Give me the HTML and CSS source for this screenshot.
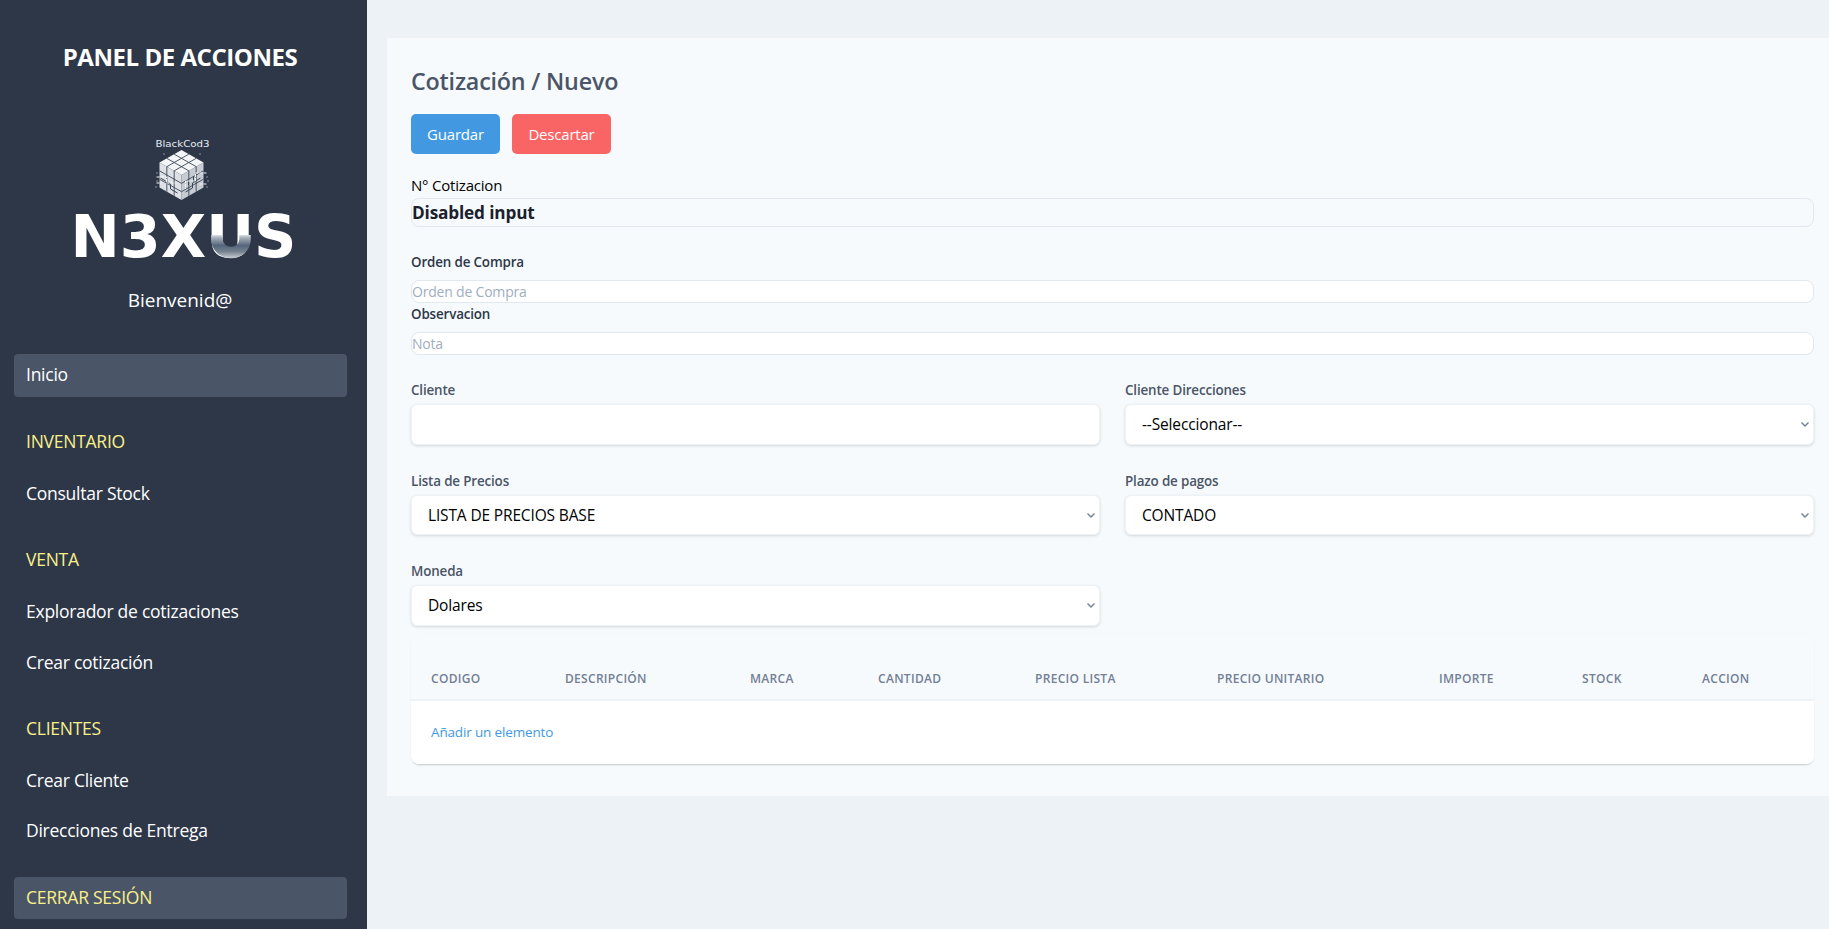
FILE: index.html
```html
<!DOCTYPE html>
<html lang="es">
<head>
<meta charset="utf-8">
<title>Cotización / Nuevo</title>
<link rel="stylesheet" href="styles.css">
</head>
<body>
<div class="app">
  <aside class="sidebar">
    <h1 class="panel-title">PANEL DE ACCIONES</h1>
    <svg class="logo" viewBox="-3.5 0 240 137" width="240" height="137" role="img" aria-label="BlackCod3 N3XUS">
      <defs>
        <linearGradient id="ugrad" gradientUnits="userSpaceOnUse" x1="0" y1="96" x2="0" y2="121">
          <stop offset="0" stop-color="#ffffff"/>
          <stop offset="0.2" stop-color="#a4aeb9"/>
          <stop offset="0.5" stop-color="#55657a"/>
          <stop offset="0.75" stop-color="#76838f"/>
          <stop offset="1" stop-color="#c7ced4"/>
        </linearGradient>
      </defs>
      <text class="logo-small" x="92" y="10" textLength="54" lengthAdjust="spacingAndGlyphs">BlackCod3</text>
      <g class="cube">
        <polygon class="face-top" points="118,13 140,25.5 118,38 96,25.5"/>
        <polygon class="face-left" points="96,25.5 118,38 118,63 96,50.5"/>
        <polygon class="face-right" points="140,25.5 118,38 118,63 140,50.5"/>
        <path class="cube-lines" d="M103.33 21.33L125.33 33.83M110.67 17.17L132.67 29.67M103.33 29.67L125.33 17.17M110.67 33.83L132.67 21.33M103.33 29.67V54.67M110.67 33.83V58.83M96 33.83L118 46.33M96 42.17L118 54.67M132.67 29.67V54.67M125.33 33.83V58.83M140 33.83L118 46.33M140 42.17L118 54.67"/>
        <path class="cube-dark" d="M97 41L107 47V52L114 56M122 55L129 51V46L137 41M125 42V48M130 39V45"/>
        <path class="cube-circuit" d="M93 40H103V46H112M143 36H132V44H122V52M93 46H98M136 47H143"/>
        <path class="cube-dots" d="M93 36h1M93 44h1M92 50h1M143 40h1M144 44h1M143 50h1M100 17h1M136 17h1"/>
      </g>
      <text class="logo-word" x="7" y="120">N3XUS</text>
      <path class="logo-u" d="M153.5 98V102.5A14 13 0 0 0 181.5 102.5V98"/>
    </svg>
    <p class="welcome">Bienvenid@</p>
    <nav class="nav">
      <a class="nav-item nav-box">Inicio</a>
      <div class="nav-heading">INVENTARIO</div>
      <a class="nav-item">Consultar Stock</a>
      <div class="nav-heading">VENTA</div>
      <a class="nav-item">Explorador de cotizaciones</a>
      <a class="nav-item nav-item-next">Crear cotización</a>
      <div class="nav-heading">CLIENTES</div>
      <a class="nav-item">Crear Cliente</a>
      <a class="nav-item nav-item-next">Direcciones de Entrega</a>
      <a class="nav-item nav-box nav-logout">CERRAR SESIÓN</a>
    </nav>
  </aside>
  <main class="main">
    <section class="card">
      <h2 class="page-title">Cotización / Nuevo</h2>
      <div class="actions">
        <button class="btn btn-blue" type="button">Guardar</button>
        <button class="btn btn-red" type="button">Descartar</button>
      </div>
      <label class="label-number" for="num">N° Cotizacion</label>
      <input class="input-number" id="num" type="text" value="Disabled input" disabled>
      <label class="label-dark label-order" for="oc">Orden de Compra</label>
      <input class="input-thin" id="oc" type="text" placeholder="Orden de Compra">
      <label class="label-dark label-note" for="nota">Observacion</label>
      <input class="input-thin" id="nota" type="text" placeholder="Nota">
      <div class="form-grid">
        <div class="field">
          <label class="label" for="cli">Cliente</label>
          <input class="control" id="cli" type="text">
        </div>
        <div class="field">
          <label class="label" for="dir">Cliente Direcciones</label>
          <select class="control" id="dir"><option>--Seleccionar--</option></select>
        </div>
        <div class="field">
          <label class="label" for="lista">Lista de Precios</label>
          <select class="control" id="lista"><option>LISTA DE PRECIOS BASE</option></select>
        </div>
        <div class="field">
          <label class="label" for="plazo">Plazo de pagos</label>
          <select class="control" id="plazo"><option>CONTADO</option></select>
        </div>
        <div class="field">
          <label class="label" for="mon">Moneda</label>
          <select class="control" id="mon"><option>Dolares</option></select>
        </div>
      </div>
      <div class="table-wrap">
        <table class="items">
          <thead>
            <tr>
              <th>Codigo</th><th>Descripción</th><th>Marca</th><th>Cantidad</th><th>Precio Lista</th><th>Precio Unitario</th><th>Importe</th><th>Stock</th><th>Accion</th>
            </tr>
          </thead>
          <tbody>
            <tr><td colspan="9"><a class="add-link">Añadir un elemento</a></td></tr>
          </tbody>
        </table>
      </div>
    </section>
  </main>
</div>
</body>
</html>
```
FILE: styles.css
```css
* { box-sizing: border-box; }
html, body { margin: 0; height: 100%; }
body {
  font-family: "Open Sans", "Noto Sans", "Liberation Sans", sans-serif;
  background: #edf2f7;
  color: #1a202c;
  overflow: hidden;
}
.app { display: flex; height: 929px; }

.sidebar {
  width: 367px;
  flex: none;
  background: #2d3748;
  color: #fff;
  display: flex;
  flex-direction: column;
  align-items: center;
  padding: 41px 7px 0 0;
}
.panel-title {
  margin: 0;
  font-size: 24px;
  line-height: 32px;
  font-weight: 700;
  letter-spacing: -0.45px;
}
.logo { display: block; margin-top: 64px; }
.logo-small { font: 400 9.5px "DejaVu Sans", sans-serif; fill: #e8edf2; }
.logo-word { font: 700 58.9px "DejaVu Sans", sans-serif; fill: #fff; }
.logo-u { fill: none; stroke: url(#ugrad); stroke-width: 11.5; }
.face-top { fill: #f3f5f7; }
.face-left { fill: #dde1e5; }
.face-right { fill: #c6ccd2; }
.cube-lines { fill: none; stroke: #3b4656; stroke-width: 0.9; }
.cube-dark { fill: none; stroke: #3b4656; stroke-width: 1; }
.cube-circuit { fill: none; stroke: #f4f6f8; stroke-width: 1; stroke-dasharray: 3 1; }
.cube-dots { fill: none; stroke: #e2e8f0; stroke-width: 1; }
.welcome {
  margin: 12px 0 0;
  font-size: 19px;
  line-height: 28px;
}
.nav { width: 100%; padding: 40px 13px 0 14px; display: flex; flex-direction: column; }
.nav-item {
  display: block;
  flex: none;
  padding: 7px 12px;
  font-size: 17.5px;
  line-height: 27px;
  height: 43px;
  letter-spacing: -0.25px;
  color: #fff;
  white-space: nowrap;
}
.nav-box { background: #4a5568; border-radius: 4px; }
.nav-item-next { margin-top: 7.5px; }
.nav-heading {
  flex: none;
  padding: 7px 12px;
  margin-top: 23px;
  height: 43px;
  font-size: 17.5px;
  line-height: 27px;
  letter-spacing: -0.25px;
  color: #faf089;
}
.nav-box + .nav-heading { margin-top: 24px; }
.nav-heading + .nav-item { margin-top: 9px; }
.nav-logout { margin-top: 24px; height: 42px; color: #faf089; }

.main { flex: 1; min-width: 0; padding: 38px 0 0 20px; }
.card {
  background: #f7fafc;
  padding: 27.5px 15px 32px 24px;
}
.page-title {
  margin: 0;
  font-size: 23.3px;
  line-height: 31px;
  font-weight: 600;
  color: #4a5568;
  letter-spacing: -0.2px;
}
.actions { display: flex; gap: 12px; margin-top: 17.5px; }
.btn {
  height: 40px;
  border: 0;
  border-radius: 5px;
  padding: 0 16px;
  font: 400 15px/24px "Open Sans", sans-serif;
  letter-spacing: -0.2px;
  color: #fff;
}
.btn-blue { background: #4299e1; width: 89px; }
.btn-red { background: #f96565; width: 99px; }

label { display: block; }
.label-number {
  margin-top: 20px;
  font-size: 15px;
  line-height: 23px;
  letter-spacing: -0.2px;
  color: #000;
}
.input-number {
  display: block;
  width: 100%;
  height: 29px;
  margin-top: 1px;
  padding: 0;
  border: 1px solid #e2e8f0;
  border-radius: 8px;
  background: transparent;
  font: 700 17.2px "Open Sans", sans-serif;
  letter-spacing: -0.15px;
  color: #1a202c;
}
.label-dark {
  font-size: 13.4px;
  line-height: 20px;
  font-weight: 600;
  letter-spacing: -0.15px;
  color: #2d3748;
}
.label-order { margin: 25px 0 8px; }
.label-note { margin: 1px 0 8px; }
.input-thin {
  display: block;
  width: 100%;
  height: 23px;
  padding: 0;
  border: 1px solid #e2e8f0;
  border-radius: 8px;
  background: #fff;
  font: 400 14px "Open Sans", sans-serif;
}
.input-thin::placeholder { color: #a0aec0; opacity: 1; letter-spacing: -0.2px; }

.form-grid {
  margin-top: 25px;
  display: grid;
  grid-template-columns: 1fr 1fr;
  column-gap: 25px;
  row-gap: 26px;
}
.label {
  margin-bottom: 4px;
  font-size: 13.4px;
  line-height: 20px;
  font-weight: 600;
  letter-spacing: -0.15px;
  color: #4a5568;
}
.control {
  display: block;
  width: 100%;
  height: 40.5px;
  padding: 0 24px 0 16px;
  border: 1px solid #edf2f7;
  border-radius: 6px;
  background-color: #fff;
  box-shadow: 0 1px 3px rgba(0, 0, 0, 0.14);
  font: 400 15.5px "Open Sans", sans-serif;
  letter-spacing: -0.15px;
  color: #000;
}
select.control {
  appearance: none;
  background-image: url("data:image/svg+xml,%3Csvg xmlns='http://www.w3.org/2000/svg' width='10' height='10' viewBox='0 0 10 10'%3E%3Cpath d='M1.5 3.5L5 7l3.5-3.5' fill='none' stroke='%23718096' stroke-width='1.4'/%3E%3C/svg%3E");
  background-repeat: no-repeat;
  background-position: right 3px center;
}

.table-wrap {
  margin-top: 8px;
  border-radius: 8px;
  box-shadow: 0 2px 2px -1px rgba(0, 0, 0, 0.2), 0 0 2px rgba(0, 0, 0, 0.03);
  overflow: hidden;
}
.items { width: 100%; border-collapse: collapse; table-layout: fixed; }
.items th {
  padding: 36px 20px 10px;
  height: 66px;
  text-align: left;
  font-size: 12px;
  line-height: 18px;
  font-weight: 600;
  letter-spacing: 0.3px;
  text-transform: uppercase;
  color: #718096;
  background: #f7fafc;
  border-bottom: 2px solid #edf2f7;
  white-space: nowrap;
}
.items th:nth-child(1) { width: 134px; }
.items th:nth-child(2) { width: 185px; }
.items th:nth-child(3) { width: 128px; }
.items th:nth-child(4) { width: 157px; }
.items th:nth-child(5) { width: 182px; }
.items th:nth-child(6) { width: 222px; }
.items th:nth-child(7) { width: 143px; }
.items th:nth-child(8) { width: 120px; }
.items td {
  height: 64px;
  padding: 0 20px 2px;
  background: #fff;
}
.add-link { font-size: 13.5px; letter-spacing: -0.15px; color: #4299e1; }
```
